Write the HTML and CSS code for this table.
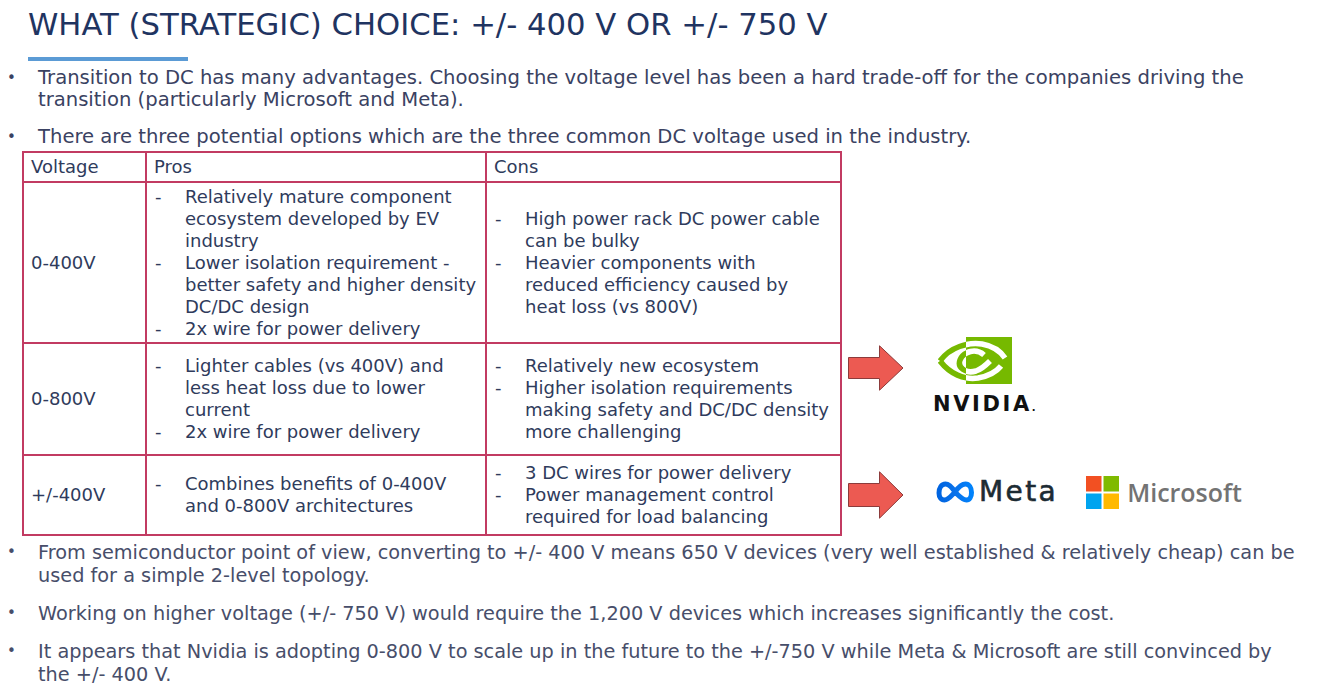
FILE: index.html
```html
<!DOCTYPE html>
<html lang="en">
<head>
<meta charset="utf-8">
<title>What (strategic) choice</title>
<link rel="stylesheet" href="styles.css">
</head>
<body>
<div class="slide">
  <h1 class="title">WHAT (STRATEGIC) CHOICE: +/- 400 V OR +/- 750 V</h1>
  <div class="rule"></div>

  <ul class="points top">
    <li class="point"><span class="dot">•</span><span class="ptext">Transition to DC has many advantages. Choosing the voltage level has been a hard trade-off for the companies driving the transition (particularly Microsoft and Meta).</span></li>
    <li class="point"><span class="dot">•</span><span class="ptext">There are three potential options which are the three common DC voltage used in the industry.</span></li>
  </ul>

  <table class="grid">
    <colgroup>
      <col class="w1"><col class="w2"><col class="w3"><col class="w4">
    </colgroup>
    <tr class="r-head">
      <td class="cell">Voltage</td>
      <td class="cell">Pros</td>
      <td class="cell">Cons</td>
      <td class="side"></td>
    </tr>
    <tr class="r1">
      <td class="cell">0-400V</td>
      <td class="cell">
        <ul class="dash">
          <li><span class="d">-</span><span>Relatively mature component ecosystem developed by EV industry</span></li>
          <li><span class="d">-</span><span>Lower isolation requirement - better safety and higher density DC/DC design</span></li>
          <li><span class="d">-</span><span>2x wire for power delivery</span></li>
        </ul>
      </td>
      <td class="cell">
        <ul class="dash">
          <li><span class="d">-</span><span>High power rack DC power cable can be bulky</span></li>
          <li><span class="d">-</span><span>Heavier components with<br>reduced efficiency caused by<br>heat loss (vs 800V)</span></li>
        </ul>
      </td>
      <td class="side"></td>
    </tr>
    <tr class="r2">
      <td class="cell">0-800V</td>
      <td class="cell">
        <ul class="dash">
          <li><span class="d">-</span><span>Lighter cables (vs 400V) and less heat loss due to lower current</span></li>
          <li><span class="d">-</span><span>2x wire for power delivery</span></li>
        </ul>
      </td>
      <td class="cell">
        <ul class="dash">
          <li><span class="d">-</span><span>Relatively new ecosystem</span></li>
          <li><span class="d">-</span><span>Higher isolation requirements making safety and DC/DC density more challenging</span></li>
        </ul>
      </td>
      <td class="side side-top">
        <div class="logos nv-row">
          <svg class="arrow" width="56" height="46" viewBox="0 0 56 46"><path d="M0.5 12.5 H31.5 V0.8 L55 23 L31.5 45.2 V33.5 H0.5 Z" fill="#ec5a52" stroke="#8c3b3b" stroke-width="1"/></svg>
          <div class="nvidia">
            <svg class="nv-eye" width="74" height="47" viewBox="0 0 74 47">
              <defs>
                <clipPath id="nvL"><rect x="0" y="0" width="28" height="47"/></clipPath>
                <clipPath id="nvR"><rect x="28" y="0" width="46" height="47"/></clipPath>
              </defs>
              <rect x="28" y="0" width="46" height="47" fill="#76b900"/>
              <g clip-path="url(#nvL)" fill="none" stroke="#76b900" stroke-width="5.5" stroke-linecap="butt">
                <path d="M2 24 C12 10 30 5 44 7 C55 9 63 15 67 21"/>
                <path d="M2 24 C12 37 26 43 40 41 C51 39 59 34 63 29"/>
                <path d="M44 17 C36 12 25 15 22 23 C19 31 28 36 36 34"/>
              </g>
              <g clip-path="url(#nvR)" fill="none" stroke="#ffffff" stroke-width="5.5" stroke-linecap="butt">
                <path d="M2 24 C12 10 30 5 44 7 C55 9 63 15 67 21"/>
                <path d="M2 24 C12 37 26 43 40 41 C51 39 59 34 63 29"/>
                <path d="M46 18 C38 11 26 14 22 23 C19 31 28 37 38 34 C44 32 48 28 52 24"/>
              </g>
            </svg>
            <span class="nv-word">NVIDIA<span class="nv-dot">.</span></span>
          </div>
        </div>
      </td>
    </tr>
    <tr class="r3">
      <td class="cell">+/-400V</td>
      <td class="cell">
        <ul class="dash">
          <li><span class="d">-</span><span>Combines benefits of 0-400V and 0-800V architectures</span></li>
        </ul>
      </td>
      <td class="cell">
        <ul class="dash">
          <li><span class="d">-</span><span>3 DC wires for power delivery</span></li>
          <li><span class="d">-</span><span>Power management control required for load balancing</span></li>
        </ul>
      </td>
      <td class="side">
        <div class="logos meta-row">
          <svg class="arrow" width="56" height="48" viewBox="0 0 56 48"><path d="M0.5 12.5 H31.5 V0.8 L55 24 L31.5 47.2 V35.5 H0.5 Z" fill="#ec5a52" stroke="#8c3b3b" stroke-width="1"/></svg>
          <div class="meta">
            <svg class="meta-mark" width="38" height="22" viewBox="0 0 38 22">
              <defs>
                <linearGradient id="mg" x1="0" y1="0" x2="1" y2="0">
                  <stop offset="0" stop-color="#0064e0"/>
                  <stop offset="0.5" stop-color="#0a72ea"/>
                  <stop offset="1" stop-color="#0082fb"/>
                </linearGradient>
              </defs>
              <path d="M19 11 C15.5 5.5 12.5 3 9.5 3 C5.5 3 3 7 3 12 C3 16 5 19 8.5 19 C12.5 19 15.5 14.5 19 11 C22.5 6 25.5 3 29.5 3 C33 3 35.5 6.5 35.5 11.5 C35.5 16 33.5 19 30.5 19 C26.5 19 23 15 19 11 Z" fill="none" stroke="url(#mg)" stroke-width="5" stroke-linejoin="round"/>
            </svg>
            <span class="meta-word">Meta</span>
          </div>
          <div class="ms">
            <svg class="ms-mark" width="33" height="33" viewBox="0 0 33 33">
              <rect x="0" y="0" width="15.5" height="15.5" fill="#f25022"/>
              <rect x="17.5" y="0" width="15.5" height="15.5" fill="#7fba00"/>
              <rect x="0" y="17.5" width="15.5" height="15.5" fill="#00a4ef"/>
              <rect x="17.5" y="17.5" width="15.5" height="15.5" fill="#ffb900"/>
            </svg>
            <span class="ms-word">Microsoft</span>
          </div>
        </div>
      </td>
    </tr>
  </table>

  <ul class="points bottom">
    <li class="point"><span class="dot">•</span><span class="ptext">From semiconductor point of view, converting to +/- 400 V means 650 V devices (very well established &amp; relatively cheap) can be used for a simple 2-level topology.</span></li>
    <li class="point"><span class="dot">•</span><span class="ptext">Working on higher voltage (+/- 750 V) would require the 1,200 V devices which increases significantly the cost.</span></li>
    <li class="point"><span class="dot">•</span><span class="ptext">It appears that Nvidia is adopting 0-800 V to scale up in the future to the +/-750 V while Meta &amp; Microsoft are still convinced by the +/- 400 V.</span></li>
  </ul>
</div>
</body>
</html>
```

FILE: styles.css
```css
html, body {
  margin: 0;
  padding: 0;
  background: #ffffff;
}

body {
  font-family: "DejaVu Sans", "Liberation Sans", sans-serif;
  color: #3a4262;
}

.slide {
  width: 1324px;
  height: 691px;
  overflow: hidden;
  box-sizing: border-box;
  padding: 10px 18px 0 0;
}

.title {
  margin: 0 0 0 28px;
  font-size: 30.7px;
  line-height: 30px;
  font-weight: normal;
  color: #1f3461;
  white-space: nowrap;
}

.rule {
  margin: 17px 0 0 28px;
  width: 160px;
  height: 4px;
  background: #5b9bd5;
}

.points {
  list-style: none;
  margin: 0;
  padding: 0;
}

.point {
  display: flex;
}

.dot {
  flex: 0 0 auto;
  width: 31px;
  padding-left: 7px;
  font-size: 15px;
}

.ptext {
  flex: 1 1 auto;
}

.top {
  margin-top: 6px;
  font-size: 19.6px;
  line-height: 22px;
}

.top .point + .point {
  margin-top: 15px;
}

.bottom {
  margin-top: 5px;
  font-size: 19.3px;
  line-height: 23px;
  color: #474e6a;
}

.bottom .point + .point {
  margin-top: 15px;
}

.grid {
  margin: 3px 0 0 22px;
  border-collapse: collapse;
  table-layout: fixed;
  width: 1280px;
  font-size: 18px;
  line-height: 22px;
  color: #2f3b5c;
}

.w1 { width: 123px; }
.w2 { width: 340px; }
.w3 { width: 355px; }
.w4 { width: 462px; }

.cell {
  border: 2px solid #c23b62;
  padding: 0 2px 0 7px;
  vertical-align: middle;
}

.r-head { height: 30px; }
.r1 { height: 161px; }
.r2 { height: 112px; }
.r3 { height: 80px; }

.side {
  padding: 0 0 0 6px;
  vertical-align: middle;
}

.side-top {
  vertical-align: top;
}

.dash {
  list-style: none;
  margin: 0;
  padding: 0 0 0 1px;
}

.dash li {
  display: flex;
}

.dash .d {
  flex: 0 0 30px;
}

.logos {
  display: flex;
}

.nv-row {
  align-items: flex-start;
  margin-top: -6px;
}

.nv-row .arrow {
  margin-top: 8px;
}

.nvidia {
  display: flex;
  flex-direction: column;
  align-items: flex-start;
  margin-left: 29px;
}

.nv-eye {
  display: block;
  margin-left: 5px;
}

.nv-word {
  margin-top: 9px;
  font-family: "DejaVu Sans", sans-serif;
  font-weight: bold;
  font-size: 21px;
  line-height: 22px;
  letter-spacing: 2.6px;
  color: #111111;
}

.nv-dot {
  font-size: 10px;
  letter-spacing: 0;
}

.meta-row {
  align-items: center;
}

.meta {
  display: flex;
  align-items: center;
  margin-left: 32px;
  margin-top: -6px;
}

.meta-mark {
  display: block;
}

.meta-word {
  margin-left: 5px;
  font-family: "DejaVu Sans", sans-serif;
  font-size: 28px;
  line-height: 30px;
  letter-spacing: 2.4px;
  -webkit-text-stroke: 0.6px #1c2b33;
  color: #1c2b33;
}

.ms {
  display: flex;
  align-items: center;
  margin-left: 28px;
  margin-top: -6px;
}

.ms-mark {
  display: block;
}

.ms-word {
  margin-left: 8px;
  font-family: "Open Sans", sans-serif;
  font-weight: 600;
  font-size: 25px;
  line-height: 30px;
  color: #737373;
}
```
